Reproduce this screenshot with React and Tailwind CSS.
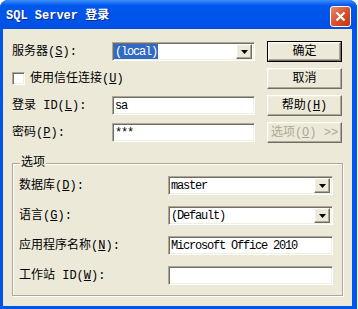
import React from 'react';

const font = "font-['Liberation_Mono','Noto_Sans_CJK_SC',monospace] text-[12px] leading-none";
const ui = `${font} text-black`;
const mono = "font-['Liberation_Mono','Noto_Sans_CJK_SC',monospace] text-[12px] tracking-[-1.2px]";

const sunken =
  'border border-t-[#aca899] border-l-[#aca899] border-r-white border-b-white shadow-[inset_1px_1px_0_#716f64,inset_-1px_-1px_0_#f1efe2] bg-white';
const raised =
  'border border-t-white border-l-white border-r-[#716f64] border-b-[#716f64] shadow-[inset_-1px_-1px_0_#aca899,inset_1px_1px_0_#f1efe2] bg-[#ece9d8]';

const Key = ({ k }) => (
  <>
    (<span className="underline">{k}</span>)
  </>
);

const Arrow = () => (
  <div className={`w-[16px] h-[15px] ml-auto mr-[2px] flex items-center justify-center ${raised}`}>
    <svg width="7" height="4" viewBox="0 0 7 4">
      <path d="M0 0h7L3.5 4z" fill="#000" />
    </svg>
  </div>
);

const Combo = ({ value, selected, width }) => (
  <div className={`h-[19px] ${width} flex items-center ${sunken}`}>
    <div className="h-[15px] flex items-center ml-[1px]">
      <span
        className={`h-[15px] flex items-center px-[1px] ${mono} ${
          selected ? 'bg-[#316ac5] text-white' : 'text-black'
        }`}
      >
        {value}
      </span>
    </div>
    <Arrow />
  </div>
);

const Field = ({ value, width }) => (
  <div className={`h-[19px] ${width} flex items-center px-[2px] ${sunken}`}>
    <span className={`${mono} text-black`}>{value}</span>
  </div>
);

const Button = ({ children, primary, disabled }) => {
  const inner = (
    <div
      className={`w-full h-full flex items-center justify-center ${raised} ${font} ${
        disabled ? 'text-[#aca899]' : 'text-black'
      }`}
    >
      {children}
    </div>
  );
  if (primary)
    return <div className="w-[75px] h-[21px] border border-black">{inner}</div>;
  return <div className="w-[75px] h-[21px]">{inner}</div>;
};

export default function App() {
  return (
    <div className="w-[358px] h-[309px] bg-white overflow-hidden">
      <div className="w-[357px] h-[312px] rounded-t-[8px] bg-[#0055ea] flex flex-col overflow-hidden">
        {/* title bar */}
        <div className="h-[29px] shrink-0 flex items-center pl-[6px] pr-[6px] bg-linear-to-b from-[#3d8ff8] from-[0%] via-[#0058ee] via-[18%] to-[#0050e4]">
          <span className="font-['Liberation_Mono','Noto_Sans_CJK_SC',monospace] text-[12px] font-bold text-white [text-shadow:1px_1px_0_#0a2a8c] mt-[2px]">
            SQL Server 登录
          </span>
          <div className="ml-auto w-[21px] h-[21px] mt-[3px] rounded-[3px] border border-white bg-linear-to-br from-[#e98a68] via-[#d8522e] to-[#bc3514] flex items-center justify-center">
            <svg width="11" height="11" viewBox="0 0 11 11">
              <path d="M1.5 1.5l8 8M9.5 1.5l-8 8" stroke="#fff" strokeWidth="2.2" />
            </svg>
          </div>
        </div>

        {/* client area */}
        <div className="ml-[3px] w-[349px] h-[277px] bg-[#ece9d8] pl-[9px] pt-[12px] flex flex-col">
          <div className="flex">
            <div className="w-[243px] pt-[1px] flex flex-col gap-[8px]">
              <div className="h-[19px] flex items-center">
                <span className={`w-[100px] ${ui}`}>
                  服务器<Key k="S" />:
                </span>
                <Combo value="(local)" selected width="w-[143px]" />
              </div>
              <div className="h-[19px] flex items-center">
                <div className={`w-[13px] h-[13px] ${sunken}`} />
                <span className={`ml-[5px] ${ui}`}>
                  使用信任连接<Key k="U" />
                </span>
              </div>
              <div className="h-[19px] flex items-center">
                <span className={`w-[100px] ${ui}`}>
                  登录 ID<Key k="L" />:
                </span>
                <Field value="sa" width="w-[143px]" />
              </div>
              <div className="h-[19px] flex items-center">
                <span className={`w-[100px] ${ui}`}>
                  密码<Key k="P" />:
                </span>
                <Field value="***" width="w-[143px]" />
              </div>
            </div>
            <div className="ml-[12px] flex flex-col gap-[6px]">
              <Button primary>确定</Button>
              <Button>取消</Button>
              <Button>
                帮助<Key k="H" />
              </Button>
              <Button disabled>
                选项<Key k="O" />&nbsp;&gt;&gt;
              </Button>
            </div>
          </div>

          {/* options group */}
          <div className="relative mt-[20px] w-[331px] h-[133px] border border-[#aca899] shadow-[1px_1px_0_#fff,inset_1px_1px_0_#fff] pl-[6px] pt-[12px] flex flex-col gap-[11px]">
            <span className={`absolute left-[7px] top-[-7px] px-[1px] bg-[#ece9d8] ${ui}`}>选项</span>
            <div className="h-[19px] flex items-center">
              <span className={`w-[149px] ${ui}`}>
                数据库<Key k="D" />:
              </span>
              <Combo value="master" width="w-[165px]" />
            </div>
            <div className="h-[19px] flex items-center">
              <span className={`w-[149px] ${ui}`}>
                语言<Key k="G" />:
              </span>
              <Combo value="(Default)" width="w-[165px]" />
            </div>
            <div className="h-[19px] flex items-center">
              <span className={`w-[149px] ${ui}`}>
                应用程序名称<Key k="N" />:
              </span>
              <Field value="Microsoft Office 2010" width="w-[165px]" />
            </div>
            <div className="h-[19px] flex items-center">
              <span className={`w-[149px] ${ui}`}>
                工作站 ID<Key k="W" />:
              </span>
              <Field value="" width="w-[165px]" />
            </div>
          </div>
        </div>
      </div>
    </div>
  );
}
